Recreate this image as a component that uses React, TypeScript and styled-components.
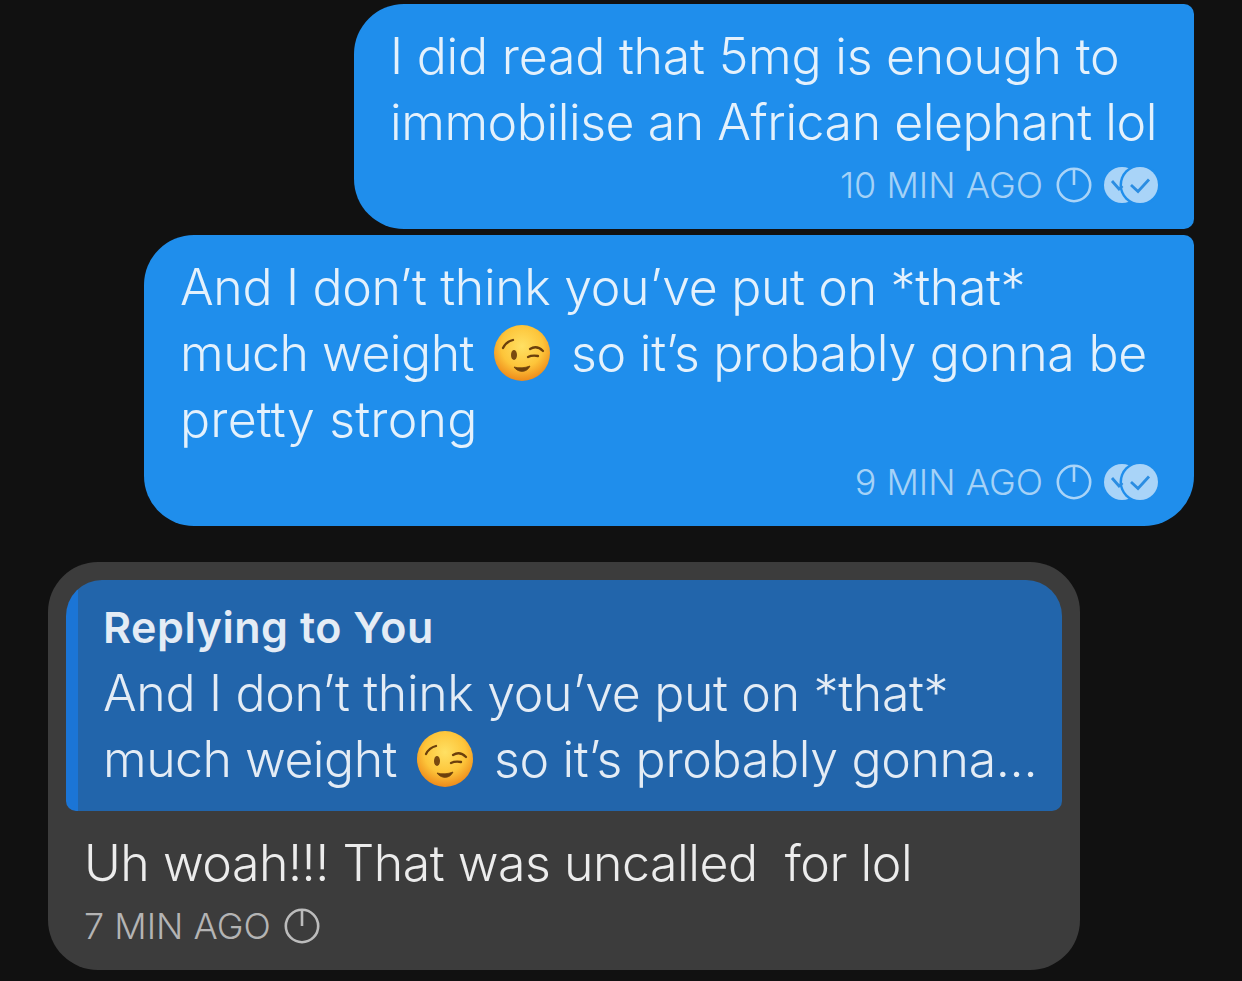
import React from 'react';
import styled, { createGlobalStyle } from 'styled-components';

const Global = createGlobalStyle`
  html, body { margin: 0; padding: 0; background: #111111; }
  body { font-family: Inter, "Liberation Sans", sans-serif; }
`;

const Page = styled.main`
  box-sizing: border-box;
  width: 1242px;
  height: 981px;
  overflow: hidden;
  padding: 4px 48px 0;
  display: flex;
  flex-direction: column;
  align-items: flex-end;
  background: #111111;
`;

const Bubble = styled.section<{ $width: number; $tail?: boolean; $gap: number }>`
  box-sizing: border-box;
  width: ${p => p.$width}px;
  margin-bottom: ${p => p.$gap}px;
  padding: 19px 36px 24px 36px;
  background: #1f8eec;
  border-radius: 50px 10px ${p => (p.$tail ? '10px' : '50px')} 50px;
  color: #e4f1fc;
`;

const TextLine = styled.div<{ $track?: number }>`
  display: flex;
  align-items: center;
  font-size: 50px;
  font-weight: 340;
  line-height: 66px;
  letter-spacing: ${p => p.$track ?? -0.33}px;
  white-space: pre;
`;

const TightRun = styled.span`
  letter-spacing: -0.5px;
`;

const Meta = styled.div<{ $tone: string; $start?: boolean }>`
  display: flex;
  align-items: center;
  justify-content: ${p => (p.$start ? 'flex-start' : 'flex-end')};
  gap: 13px;
  height: 40px;
  margin-top: 10px;
  font-size: 36px;
  font-weight: 340;
  letter-spacing: 0;
  color: ${p => p.$tone};
`;

const ReplyBubble = styled.section`
  align-self: flex-start;
  box-sizing: border-box;
  width: 1032px;
  height: 408px;
  padding: 18px;
  background: #3c3c3c;
  border-radius: 50px;
`;

const Quote = styled.div`
  box-sizing: border-box;
  height: 231px;
  padding: 15px 20px 0 37px;
  background: linear-gradient(to right, #1b75d6 12px, #2265ab 12px);
  border-radius: 36px 36px 10px 10px;
  color: #e4ecf5;
`;

const QuoteTitle = styled.div`
  font-size: 43px;
  font-weight: 600;
  line-height: 65px;
  letter-spacing: 0.55px;
  height: 65px;
`;

const Body = styled.div`
  padding: 19px 18px 0;
  color: #ececec;
`;

const EmojiWrap = styled.svg`
  flex: none;
  width: 58px;
  height: 58px;
  margin: 0 20px 0 19px;
`;

const IconSvg = styled.svg`
  flex: none;
  display: block;
`;

const Icons = styled.span`
  display: flex;
  align-items: center;
  gap: 11px;
`;

const Clock = ({ color }: { color: string }) => (
  <IconSvg width="36" height="36" viewBox="0 0 36 36" fill="none" stroke={color} strokeWidth="2.6">
    <circle cx="18" cy="18" r="16.2" />
    <path d="M18 2v16" />
  </IconSvg>
);

const DoubleCheck = () => (
  <IconSvg width="55" height="38" viewBox="0 0 55 38">
    <circle cx="19" cy="19" r="18" fill="#a9d4f8" />
    <circle cx="37" cy="19" r="20.5" fill="#1f8eec" />
    <circle cx="37" cy="19" r="18" fill="#a9d4f8" />
    <path d="M9 15l7 8 3.5-3" fill="none" stroke="#2b8de2" strokeWidth="2.8" />
    <path d="M28 19l7 6.5 11-12" fill="none" stroke="#2b8de2" strokeWidth="2.8" />
  </IconSvg>
);

const WinkEmoji = () => (
  <EmojiWrap viewBox="0 0 58 58">
    <defs>
      <radialGradient id="face" cx="50%" cy="38%" r="62%">
        <stop offset="0%" stopColor="#ffe063" />
        <stop offset="60%" stopColor="#fdc53a" />
        <stop offset="100%" stopColor="#ee8a1a" />
      </radialGradient>
    </defs>
    <circle cx="29" cy="29" r="28" fill="url(#face)" />
    <path d="M10 24C12 20 16 17 20 16" fill="none" stroke="#6b3f0c" strokeWidth="2.3" strokeLinecap="round" />
    <path d="M37 25C41 22.5 46 23 50 27" fill="none" stroke="#6b3f0c" strokeWidth="2.3" strokeLinecap="round" />
    <ellipse cx="21" cy="31" rx="3" ry="5" fill="#7a4a10" />
    <path d="M35 33C38 31.5 42 31.5 45 32" fill="none" stroke="#6b3f0c" strokeWidth="2.3" strokeLinecap="round" />
    <path d="M21 43C26 44.5 32 44 37 42C34 49 25 49 21 43Z" fill="#6b3f0c" stroke="#6b3f0c" strokeWidth="0.8" strokeLinejoin="round" />
  </EmojiWrap>
);

export default function App() {
  return (
    <Page>
      <Global />
      <Bubble $width={840} $tail $gap={6}>
        <TextLine $track={-0.22}>I did read that 5mg is enough to</TextLine>
        <TextLine $track={-0.44}>immobilise an African elephant lol</TextLine>
        <Meta $tone="#a5d2f7">
          10 MIN AGO
          <Icons>
            <Clock color="#a9d4f8" />
            <DoubleCheck />
          </Icons>
        </Meta>
      </Bubble>
      <Bubble $width={1050} $gap={36}>
        <TextLine>And I don’t think you’ve put on *that*</TextLine>
        <TextLine $track={-0.25}><TightRun>much weight</TightRun><WinkEmoji />so it’s probably gonna be</TextLine>
        <TextLine $track={0.2}>pretty strong</TextLine>
        <Meta $tone="#a5d2f7">
          9 MIN AGO
          <Icons>
            <Clock color="#a9d4f8" />
            <DoubleCheck />
          </Icons>
        </Meta>
      </Bubble>
      <ReplyBubble>
        <Quote>
          <QuoteTitle>Replying to You</QuoteTitle>
          <TextLine>And I don’t think you’ve put on *that*</TextLine>
          <TextLine><TightRun>much weight</TightRun><WinkEmoji />so it’s probably gonna...</TextLine>
        </Quote>
        <Body>
          <TextLine $track={-0.46}>Uh woah!!! That was uncalled  for lol</TextLine>
          <Meta $tone="#b4b4b4" $start>
            7 MIN AGO
            <Clock color="#bcbcbc" />
          </Meta>
        </Body>
      </ReplyBubble>
    </Page>
  );
}
